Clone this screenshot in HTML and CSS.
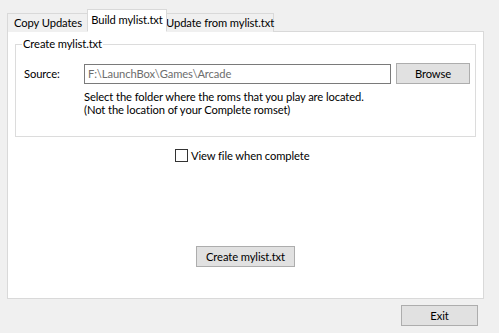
FILE: index.html
```html
<!DOCTYPE html>
<html>
<head>
<meta charset="utf-8">
<link rel="stylesheet" href="styles.css">
</head>
<body>
<div class="window">
  <div class="tabs">
    <div class="tab first">Copy Updates</div>
    <div class="tab active">Build mylist.txt</div>
    <div class="tab last">Update from mylist.txt</div>
  </div>
  <div class="panel">
    <fieldset class="group">
      <legend class="group-title">Create mylist.txt</legend>
      <div class="source-row">
        <span class="label">Source:</span>
        <div class="textbox">F:\LaunchBox\Games\Arcade</div>
        <div class="button browse">Browse</div>
      </div>
      <div class="hint">
        <div>Select the folder where the roms that you play are located.</div>
        <div>(Not the location of your Complete romset)</div>
      </div>
    </fieldset>
    <label class="check-row">
      <span class="checkbox"></span>
      <span>View file when complete</span>
    </label>
    <div class="create-row">
      <div class="button create">Create mylist.txt</div>
    </div>
  </div>
  <div class="footer">
    <div class="button exit">Exit</div>
  </div>
</div>
</body>
</html>
```
FILE: styles.css
```css
html, body {
  margin: 0;
  padding: 0;
  background: #f0f0f0;
}
body {
  font-family: "Lato", "Liberation Sans", sans-serif;
  font-size: 11.2px;
  letter-spacing: -0.1px;
  color: #000;
  width: 499px;
  height: 333px;
  overflow: hidden;
}
.window {
  display: flex;
  flex-direction: column;
  padding: 10px 0 0 7px;
  width: 477px;
}
.tabs {
  display: flex;
  align-items: flex-end;
  height: 22px;
  position: relative;
  z-index: 1;
  margin-bottom: -1px;
}
.tab {
  height: 19px;
  box-sizing: border-box;
  border: 1px solid #d9d9d9;
  border-bottom: none;
  background: #f0f0f0;
  line-height: 18px;
  text-align: center;
  white-space: nowrap;
}
.tab.first {
  width: 82px;
}
.tab.active {
  position: relative;
  z-index: 2;
  height: 23px;
  background: #fff;
  width: 80px;
  margin-left: -2px;
  margin-right: -2px;
  line-height: 19px;
  border-bottom: 1px solid #fff;
}
.tab.last {
  width: 109px;
}
.panel {
  height: 268px;
  box-sizing: border-box;
  border: 1px solid #d9d9d9;
  background: #fff;
  display: flex;
  flex-direction: column;
}
.group {
  margin: 5px 7px 0 7px;
  padding: 0 0 0 8px;
  border: 1px solid #dcdcdc;
  height: 98px;
  box-sizing: content-box;
}
.group-title {
  padding: 0 1px;
  margin-left: -2px;
  line-height: 14px;
}
.source-row {
  display: flex;
  align-items: center;
  margin-top: 12px;
}
.label {
  width: 60px;
}
.textbox {
  width: 307px;
  height: 20px;
  box-sizing: border-box;
  border: 1px solid #7a7a7a;
  color: #6d6d6d;
  padding-left: 3px;
  line-height: 18px;
}
.button {
  box-sizing: border-box;
  border: 1px solid #adadad;
  background: #e1e1e1;
  text-align: center;
  height: 21px;
  line-height: 19px;
}
.browse {
  width: 74px;
  margin-left: 5px;
}
.hint {
  margin-left: 60px;
  margin-top: 6px;
  line-height: 13px;
}
.check-row {
  display: flex;
  align-items: center;
  margin: 10px 0 0 167px;
  height: 16px;
}
.checkbox {
  width: 13px;
  height: 13px;
  box-sizing: border-box;
  border: 1px solid #333;
  background: #fff;
  margin-right: 3px;
}
.create-row {
  display: flex;
  justify-content: center;
  margin-top: 83px;
}
.create {
  width: 99px;
}
.footer {
  display: flex;
  justify-content: flex-end;
  margin-top: 6px;
  margin-right: 6px;
}
.exit {
  width: 77px;
}
```
